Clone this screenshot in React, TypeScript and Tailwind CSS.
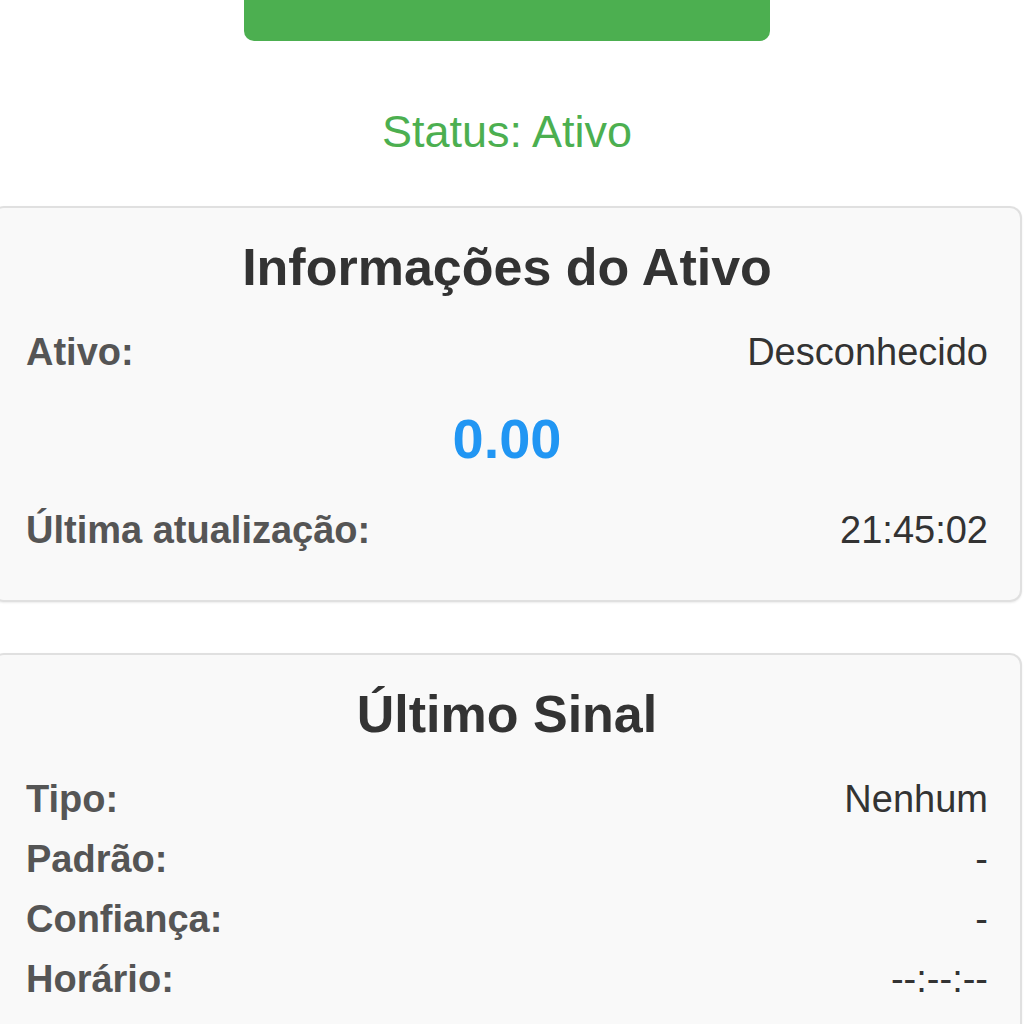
const font = { fontFamily: '"Liberation Sans", Arial, sans-serif' };

type Row = { label: string; value: string };

const SIGNAL: Row[] = [
	{ label: "Tipo:", value: "Nenhum" },
	{ label: "Padrão:", value: "-" },
	{ label: "Confiança:", value: "-" },
	{ label: "Horário:", value: "--:--:--" },
];

const InfoRow = ({ label, value, className = "" }: Row & { className?: string }) => (
	<div className={`flex justify-between items-center h-[44px] text-[38px] leading-[44px] ${className}`}>
		<span className="font-bold text-[#555]">{label}</span>
		<span className="text-[#333]">{value}</span>
	</div>
);

const Card = ({ title, children }: { title: string; children: React.ReactNode }) => (
	<div className="ml-[-8px] w-[1030px] rounded-[12px] border-2 border-[#e0e0e0] bg-[#f9f9f9] px-[32px] pt-[28px] pb-[48px] shadow-[0_1px_2px_rgba(0,0,0,0.08)]">
		<h3 className="text-center text-[52px] leading-[62px] font-bold text-[#333] mb-[32px]">{title}</h3>
		{children}
	</div>
);

export default function App() {
	return (
		<div className="w-[1024px] h-[1024px] overflow-hidden bg-white" style={font}>
			<div className="flex w-[1014px] flex-col items-center">
				<div className="mt-[-19px] h-[60px] w-[526px] rounded-[10px] bg-[#4caf50]" />
				<p className="mt-[64px] text-[45px] leading-[54px] text-[#4caf50]">Status: Ativo</p>
			</div>

			<div className="mt-[47px] flex flex-col gap-[51px]">
				<Card title="Informações do Ativo">
					<InfoRow label="Ativo:" value="Desconhecido" />
					<div className="mt-[33px] text-center text-[56px] leading-[64px] font-bold text-[#2196f3]">0.00</div>
					<InfoRow className="mt-[37px]" label="Última atualização:" value="21:45:02" />
				</Card>

				<Card title="Último Sinal">
					<div className="flex flex-col gap-[16px]">
						{SIGNAL.map((r) => (
							<InfoRow key={r.label} label={r.label} value={r.value} />
						))}
					</div>
				</Card>
			</div>
		</div>
	);
}
